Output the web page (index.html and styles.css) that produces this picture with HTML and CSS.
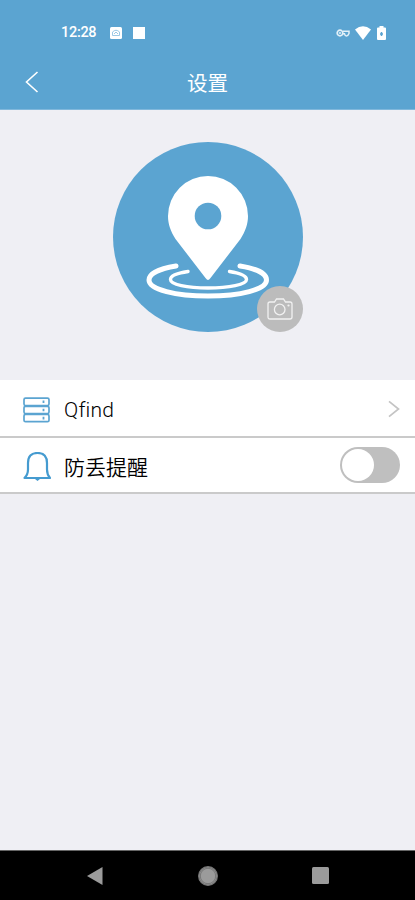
FILE: index.html
```html
<!DOCTYPE html>
<html lang="zh-CN">
<head>
    <meta charset="UTF-8">
    <meta name="viewport" content="width=device-width, initial-scale=1.0">
    <title>设置</title>
    <link rel="stylesheet" href="styles.css">
</head>
<body>

    <header class="header">
        <div class="status">
            <span class="clock">12:28</span>
            <svg class="notice" width="12" height="12" viewBox="0 0 12 12">
                <rect width="12" height="12" rx="1.5" fill="#fff"/>
                <path d="M2.5 8.5V5Q6 1.5 9.5 5V8.500ZM4 7l2-2 2 2" fill="none" stroke="#9cc9e5" stroke-width="1"/>
            </svg>
            <span class="square"></span>
            <svg class="vpn" width="14" height="8" viewBox="0 0 14 8">
                <circle cx="4" cy="4" r="2.800" fill="none" stroke="#e2f0f8" stroke-width="1.700"/>
                <circle cx="4" cy="4" r="1" fill="#e2f0f8"/>
                <path d="M7 2.200h6v2.300q-1 2.500-2.500 2.500T8.500 4.800H7" fill="none" stroke="#e2f0f8" stroke-width="1.500"/>
            </svg>
            <svg class="wifi" width="16" height="14" viewBox="0 0 16 14">
                <path d="M0 3.500Q8-2.800 16 3.500L8 14Z" fill="#fff"/>
            </svg>
            <svg class="battery" width="9" height="14" viewBox="0 0 9 14">
                <path d="M2.500 0h4v1.500H8q1 0 1 1V13q0 1-1 1H1q-1 0-1-1V2.500q0-1 1-1h1.500Z" fill="#fff"/>
                <path d="M4.500 6v4M3 8h3" stroke="#5ba4d1" stroke-width="1.500"/>
            </svg>
        </div>
        <div class="title-bar">
            <svg class="back" width="14" height="22" viewBox="0 0 14 22">
                <path d="M12.500 1L1.500 11l11 10" fill="none" stroke="#fff" stroke-width="1.600"/>
            </svg>
            <h1 class="title">设置</h1>
        </div>
    </header>

    <main class="content">
        <div class="avatar">
            <svg width="190" height="190" viewBox="0 0 190 190">
                <circle cx="95" cy="95" r="95" fill="#5ba4d1"/>
                <path d="M95 138Q94 138 92.500 136L62.500 97C57.500 89 55 82 55 74A40 40 0 0 1 135 74C135 82 132.500 89 127.500 97L97.500 136Q96 138 95 138Z" fill="#fff"/>
                <circle cx="95" cy="74" r="13.300" fill="#5ba4d1"/>
                <g fill="none" stroke="#fff" stroke-linecap="round">
                    <path d="M63 124C47 126.500 36 131.500 36 138C36 147.500 63 154 95 154S153.500 147.500 153.500 138C153.500 131.500 143 126.500 127 124" stroke-width="5"/>
                    <path d="M75 129.500C65 131 57.500 133.500 57.500 137.500C57.500 142.500 74 146 95 146S133.500 142.500 133.500 137.500C133.500 133.500 126 131 116.500 129.500" stroke-width="3.400"/>
                </g>
            </svg>
            <button class="camera">
                <svg width="26" height="22" viewBox="0 0 26 22">
                    <g fill="none" stroke="#f1f1f1" stroke-width="1.300">
                        <path d="M3 4h4.500L9.500 1h7L18.500 4H23q2 0 2 2v13q0 2-2 2H3q-2 0-2-2V6q0-2 2-2Z"/>
                        <circle cx="12.700" cy="11.500" r="5.300"/>
                    </g>
                    <circle cx="21.500" cy="7.500" r="1.100" fill="#f1f1f1"/>
                </svg>
            </button>
        </div>

        <ul class="list">
            <li class="row">
                <svg class="row-icon" width="28" height="26" viewBox="0 0 28 26">
                    <g fill="none" stroke="#5ba4d1" stroke-width="1.700">
                        <rect x="1" y="1.200" width="25" height="7.300" rx="1.500"/>
                        <rect x="1" y="9.300" width="25" height="7.300" rx="1.500"/>
                        <rect x="1" y="17.400" width="25" height="7.300" rx="1.500"/>
                    </g>
                    <path d="M20.500 3.500v2.600M20.500 11.700v2.600M20.500 19.800v2.600" stroke="#5ba4d1" stroke-width="1.800"/>
                </svg>
                <span class="label name">Qfind</span>
                <svg class="arrow" width="12" height="18" viewBox="0 0 12 18">
                    <path d="M1 1.300L10.500 9L1 16.700" fill="none" stroke="#c4c4c4" stroke-width="1.700"/>
                </svg>
            </li>
            <li class="row row-alert">
                <svg class="row-icon" width="28" height="30" viewBox="0 0 28 30">
                    <path d="M1.500 26Q5 22.500 5 17.500V11Q5 1 14.500 1T24 11v6.500q0 5 3 8.500Z" fill="none" stroke="#459bd0" stroke-width="2.200" stroke-linejoin="round"/>
                    <path d="M12 27h5l-2.500 2Z" fill="#459bd0"/>
                </svg>
                <span class="label">防丢提醒</span>
                <span class="switch"><span class="knob"></span></span>
            </li>
        </ul>
    </main>

    <nav class="nav">
        <svg width="16" height="18" viewBox="0 0 16 18"><path d="M0 9L15.500 0v18Z" fill="#9b9b9b"/></svg>
        <svg width="20" height="20" viewBox="0 0 20 20"><circle cx="10" cy="10" r="9.300" fill="#9b9b9b" stroke="#777" stroke-width="1.400"/><circle cx="10" cy="10" r="7.700" fill="none" stroke="#666" stroke-width=".7"/></svg>
        <svg width="17" height="17" viewBox="0 0 17 17"><rect width="17" height="17" rx="1.500" fill="#9b9b9b"/></svg>
    </nav>

</body>
</html>
```
FILE: styles.css
```css
* {
    box-sizing: border-box;
}
body {
    margin: 0;
    height: 100vh;
    display: flex;
    flex-direction: column;
    background-color: #efeff4;
    font-family: Roboto, "Noto Sans CJK SC", sans-serif;
    color: #000;
}
svg {
    display: block;
    flex-shrink: 0;
}
.header {
    height: 110px;
    background-color: #5ba4d1;
    border-bottom: 1px solid #81b8dc;
    color: #fff;
}
.status {
    display: flex;
    align-items: center;
    height: 55px;
    padding: 10px 29px 0 61px;
}
.clock {
    width: 49px;
    font-size: 14.5px;
    font-weight: 500;
    letter-spacing: -0.3px;
}
.square {
    width: 12px;
    height: 12px;
    margin-left: 11px;
    background-color: #fff;
}
.vpn {
    margin-left: auto;
}
.wifi {
    margin-left: 5px;
}
.battery {
    margin-left: 6px;
}
.title-bar {
    display: grid;
    grid-template-columns: 26px 1fr 26px;
    align-items: center;
    height: 54px;
    padding: 0 13px;
}
.back {
    justify-self: end;
}
.title {
    margin: 0;
    font-size: 20.5px;
    font-weight: 400;
    text-align: center;
}
.content {
    flex: 1;
}
.avatar {
    position: relative;
    width: 190px;
    margin: 32px auto 48px;
}
.camera {
    position: absolute;
    right: 0;
    bottom: 0;
    display: flex;
    align-items: center;
    justify-content: center;
    width: 46px;
    height: 46px;
    padding: 0;
    border: 0;
    border-radius: 50%;
    background-color: #bcbcbc;
}
.list {
    margin: 0;
    padding: 0;
    list-style: none;
}
.row {
    display: flex;
    align-items: center;
    height: 58px;
    padding: 0 15px 0 23px;
    background-color: #fff;
    border-bottom: 2px solid #cacaca;
}
.row-alert {
    height: 56px;
}
.row-icon {
    margin-top: 3px;
}
.label {
    flex: 1;
    margin: 1px 0 0 13px;
    font-size: 21px;
    font-weight: 350;
}
.name {
    margin-top: 3px;
    font-weight: 300;
    letter-spacing: 0.2px;
}
.arrow {
    margin-top: 2px;
}
.switch {
    width: 60px;
    height: 36px;
    padding: 2px;
    border-radius: 18px;
    background-color: #bfbfbf;
}
.knob {
    display: block;
    width: 32px;
    height: 32px;
    border-radius: 50%;
    background-color: #fff;
}
.nav {
    display: grid;
    grid-template-columns: repeat(3, 112.5px);
    justify-content: center;
    justify-items: center;
    align-items: center;
    height: 50px;
    background-color: #000;
    border-top: 1px solid #666;
}
```
